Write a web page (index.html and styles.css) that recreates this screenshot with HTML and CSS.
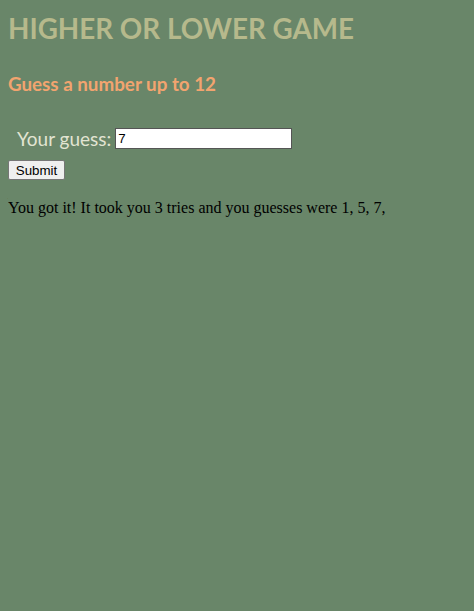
FILE: index.html
```html
<!DOCTYPE html>
<html>
<head>
<meta charset="utf-8">
<link rel="stylesheet" href="styles.css">
</head>
<body>
<h1 class="title">HIGHER OR LOWER GAME</h1>
<h2 class="subtitle">Guess a number up to 12</h2>
<form class="form">
  <div class="row">
    <label class="label" for="guess">Your guess:</label>
    <input class="input" id="guess" type="text" value="7">
  </div>
  <button class="submit" type="button">Submit</button>
</form>
<p class="result">You got it! It took you 3 tries and you guesses were 1, 5, 7,</p>
</body>
</html>
```
FILE: styles.css
```css
html, body {
  background: #698669;
}
body {
  margin: 8px;
  font-family: "Liberation Serif", serif;
  font-size: 16px;
}
.title {
  font-family: Lato, "Open Sans", sans-serif;
  font-size: 27.8px;
  line-height: 34px;
  font-weight: bold;
  color: #b6b98c;
  margin: 4px 0 0;
}
.subtitle {
  font-family: Lato, "Open Sans", sans-serif;
  font-size: 18.8px;
  line-height: 23px;
  font-weight: bold;
  color: #f2a46f;
  margin: 26px 0 0;
}
.form {
  margin-top: 32px;
}
.row {
  display: flex;
  align-items: center;
  gap: 4px;
  padding-left: 9px;
}
.label {
  font-family: Lato, "Open Sans", sans-serif;
  font-size: 19px;
  line-height: 23px;
  color: #e2e4d2;
}
.input {
  box-sizing: border-box;
  width: 177px;
  height: 21px;
  padding: 1px 2px;
  border: 1px solid #555555;
  font-family: "Liberation Sans", sans-serif;
  font-size: 13.33px;
  margin: 0;
}
.submit {
  box-sizing: border-box;
  margin-top: 10px;
  height: 20px;
  width: 57px;
  font-family: "Liberation Sans", sans-serif;
  font-size: 13.33px;
  padding: 0;
  background: #efefef;
  border: 1px solid #767676;
  border-radius: 2px;
  color: #000;
}
.result {
  margin: 19px 0;
  color: #000;
}
```
